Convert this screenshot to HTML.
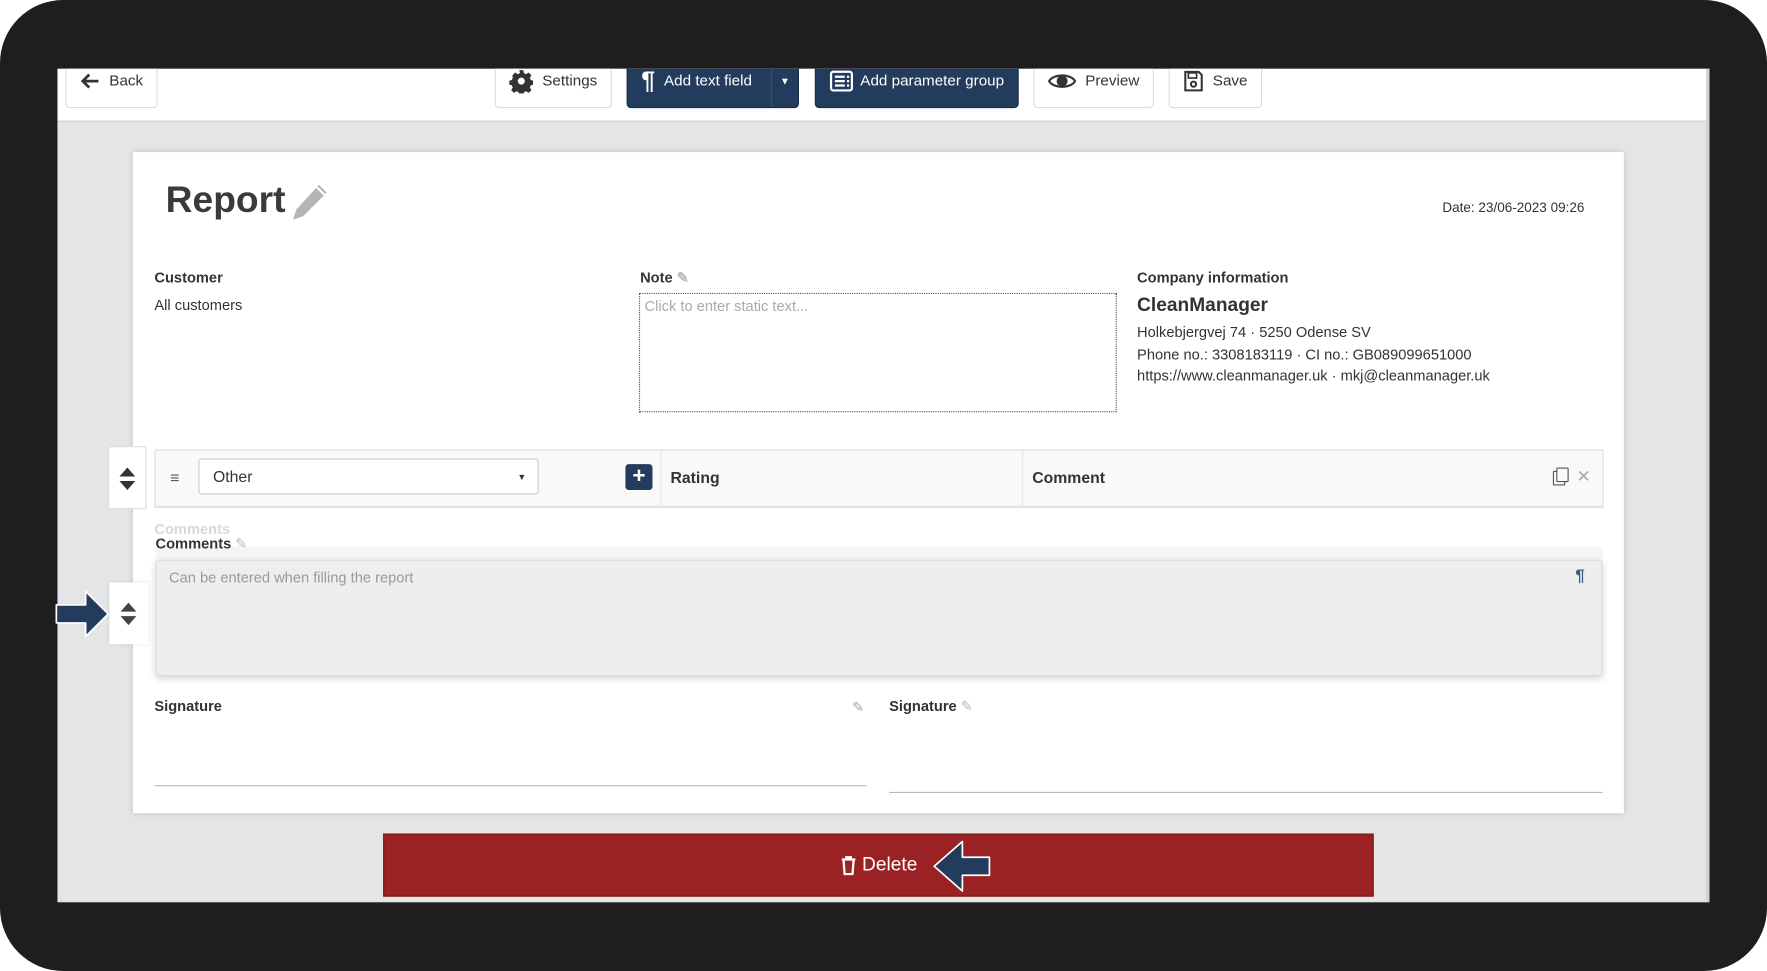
<!DOCTYPE html>
<html><head><meta charset="utf-8"><style>
html,body{margin:0;padding:0;width:1767px;height:971px;overflow:hidden;background:#fff}
#w{position:absolute;left:0;top:0;width:1568px;height:862px;transform:scale(1.12691,1.12645);transform-origin:0 0;font-family:"Liberation Sans",Arial,sans-serif;color:#333}
.frame{position:absolute;left:0;top:0;width:1568px;height:862px;background:#1f1e1f;border-radius:56px}
.scr{position:absolute;left:51px;top:61px;width:1466px;height:740px;background:#e4e5e7;overflow:hidden}
.top{position:absolute;left:0;top:0;width:1466px;height:46px;background:#fff;box-shadow:0 1px 2px rgba(0,0,0,.12)}
.btn{position:absolute;top:-6px;height:41px;border:1px solid #ddd;border-radius:0 0 4px 4px;background:#fff;font-size:13.5px;color:#333;display:flex;align-items:center;gap:8px;padding:0 12px 8px;box-sizing:border-box;white-space:nowrap}
.btn.d{background:#233b5c;color:#fff;border-color:#1a2d48}
.a{position:absolute}
.card{position:absolute;left:67px;top:74px;width:1323px;height:587px;background:#fff;box-shadow:0 0 6px rgba(0,0,0,.15)}
.lbl{font-size:13px;font-weight:bold;color:#333}
.t{font-size:13px;color:#333}
</style></head><body><div id="w">
<div class="frame"></div>
<div class="scr">
 <div class="top">
  <div class="btn" style="left:7px;width:82px"><svg width="22" height="18" viewBox="0 0 22 18"><path d="M10 2 3 9l7 7M3 9h17" stroke="#333" stroke-width="3" fill="none"/></svg>Back</div>
  <div class="btn" style="left:388px;width:104px"><svg width="22" height="22" viewBox="0 0 24 24"><path fill="#333" d="M10 1h4l.6 3 2.2 1 2.6-1.6 2.8 2.8-1.6 2.6 1 2.2 3 .6v4l-3 .6-1 2.2 1.6 2.6-2.8 2.8-2.6-1.6-2.2 1-.6 3h-4l-.6-3-2.2-1-2.6 1.6-2.8-2.8 1.6-2.6-1-2.2-3-.6v-4l3-.6 1-2.2L3 6.2 5.8 3.4 8.4 5l2.2-1zM12 8.5a3.5 3.5 0 1 0 0 7 3.5 3.5 0 0 0 0-7z"/></svg>Settings</div>
  <div class="btn d" style="left:505px;width:153px;padding:0 0 0 12px"><span style="font-size:22px;font-weight:bold;padding-bottom:8px">¶</span><span style="padding-bottom:8px">Add text field</span><span style="margin-left:auto;border-left:1px solid #34507a;width:24px;height:100%;display:flex;align-items:center;justify-content:center;font-size:9px;padding-bottom:8px;box-sizing:border-box">▼</span></div>
  <div class="btn d" style="left:672px;width:181px;gap:6px"><svg width="22" height="20" viewBox="0 0 22 20"><rect x="1.5" y="1.5" width="19" height="17" rx="2" fill="none" stroke="#fff" stroke-width="2"/><path d="M5 6h9M5 10h9M5 14h9M16 6h2M16 10h2M16 14h2" stroke="#fff" stroke-width="2"/></svg>Add parameter group</div>
  <div class="btn" style="left:866px;width:107px"><svg width="26" height="18" viewBox="0 0 26 18"><path d="M1 9C5 2 21 2 25 9 21 16 5 16 1 9z" fill="none" stroke="#333" stroke-width="2"/><circle cx="13" cy="9" r="5" fill="#333"/></svg>Preview</div>
  <div class="btn" style="left:986px;width:83px"><svg width="20" height="22" viewBox="0 0 20 22"><path d="M2 2h13l3 3v15H2z" fill="none" stroke="#333" stroke-width="2"/><rect x="5" y="3" width="8" height="5" fill="none" stroke="#333" stroke-width="1.6"/><circle cx="10" cy="14" r="2.5" fill="none" stroke="#333" stroke-width="2"/></svg>Save</div>
 </div>
 <div class="card">
  <div class="a" style="left:29px;top:23px;font-size:33px;font-weight:bold;color:#3a3a3a">Report</div>
  <svg class="a" style="left:139px;top:27px" width="36" height="36" viewBox="0 0 36 36"><path d="M26 2l7 7-21 21-9 3 3-9z" fill="#b5b5b5"/><path d="M24 4l7 7" stroke="#fff" stroke-width="2"/></svg>
  <div class="a t" style="right:35px;top:42px;font-size:12px">Date: 23/06-2023 09:26</div>
  <div class="a lbl" style="left:19px;top:104px">Customer</div>
  <div class="a t" style="left:19px;top:128px">All customers</div>
  <div class="a lbl" style="left:450px;top:104px">Note <span style="color:#bbb">✎</span></div>
  <div class="a" style="left:449px;top:125px;width:424px;height:106px;border:1px dotted #555;font-size:13px;color:#aaa;padding:3px 4px;box-sizing:border-box">Click to enter static text...</div>
  <div class="a lbl" style="left:891px;top:104px">Company information</div>
  <div class="a" style="left:891px;top:126px;font-size:17px;font-weight:bold;color:#333">CleanManager</div>
  <div class="a t" style="left:891px;top:150px;line-height:19.5px">Holkebjergvej 74 · 5250 Odense SV<br>Phone no.: 3308183119 · CI no.: GB089099651000<br>https://www.cleanmanager.uk · mkj@cleanmanager.uk</div>
  <div class="a" style="left:19px;top:264px;width:1284px;height:49px;background:#f9f9f9;border:1px solid #ddd;border-bottom:2px solid #e2e2e2"></div>
  <div class="a" style="left:33px;top:281px;font-size:14px;color:#555">≡</div>
  <div class="a" style="left:58px;top:272px;width:302px;height:32px;border:1px solid #ccc;border-radius:3px;background:#fff;font-size:14px;line-height:31px;padding-left:12px;box-sizing:border-box">Other<span style="position:absolute;right:10px;font-size:8px">▼</span></div>
  <div class="a" style="left:437px;top:277px;width:24px;height:23px;background:#233b5c;border-radius:3px;color:#fff;font-size:20px;font-weight:bold;text-align:center;line-height:23px">+</div>
  <div class="a" style="left:468px;top:265px;width:1px;height:49px;background:#e3e3e3"></div>
  <div class="a lbl" style="left:477px;top:281px;font-size:14px">Rating</div>
  <div class="a" style="left:789px;top:265px;width:1px;height:49px;background:#e3e3e3"></div>
  <div class="a lbl" style="left:798px;top:281px;font-size:14px">Comment</div>
  <div class="a" style="left:1260px;top:283px;width:9px;height:11px;border:1.5px solid #555;border-radius:1px"></div>
  <div class="a" style="left:1263px;top:280px;width:9px;height:11px;border:1.5px solid #555;border-radius:1px;background:#f9f9f9"></div>
  <div class="a" style="left:1281px;top:279px;font-size:15px;color:#aaa">✕</div>
  <div class="a lbl" style="left:19px;top:327px;color:#d8d8d8">Comments</div>
  <div class="a lbl" style="left:20px;top:340px;z-index:2">Comments <span style="color:#bbb;font-weight:normal">✎</span></div>
  <div class="a" style="left:20px;top:350px;width:1284px;height:30px;background:#f5f5f5;border-radius:3px"></div>
  <div class="a" style="left:20px;top:362px;width:1284px;height:103px;background:#eee;border:1px solid #ddd;border-radius:3px;box-shadow:0 2px 6px rgba(0,0,0,.18);box-sizing:border-box"></div>
  <div class="a t" style="left:32px;top:370px;color:#999">Can be entered when filling the report</div>
  <div class="a" style="left:1280px;top:368px;font-size:15px;font-weight:bold;color:#3d5a80">¶</div>
  <div class="a lbl" style="left:19px;top:484px">Signature</div>
  <div class="a" style="left:638px;top:485px;color:#aaa;font-size:13px">✎</div>
  <div class="a" style="left:19px;top:562px;width:632px;height:1px;background:#bbb"></div>
  <div class="a lbl" style="left:671px;top:484px">Signature <span style="color:#bbb;font-weight:normal">✎</span></div>
  <div class="a" style="left:671px;top:568px;width:633px;height:1px;background:#bbb"></div>
 </div>
 <div class="a" style="left:45px;top:335px;width:34px;height:56px;background:#fff;border:1px solid #ddd;box-sizing:border-box"><svg style="position:absolute;left:8px;top:17px" width="16" height="22" viewBox="0 0 16 22"><path d="M8 1l7 8H1zM8 21l7-8H1z" fill="#333"/></svg></div>
 <div class="a" style="left:46px;top:456px;width:35px;height:55px;background:#fff;box-shadow:0 0 3px rgba(0,0,0,.15)"><svg style="position:absolute;left:9px;top:17px" width="16" height="22" viewBox="0 0 16 22"><path d="M8 1l7 8H1zM8 21l7-8H1z" fill="#444"/></svg></div>
 <div class="a" style="left:289px;top:679px;width:879px;height:56px;background:#9b2224;border:1px solid #7a1416;box-sizing:border-box;color:#fff;font-size:17px;display:flex;align-items:center;justify-content:center;gap:4px;padding-right:0"><svg width="16" height="18" viewBox="0 0 16 18"><path d="M2 4h12M6 4V2h4v2M3.5 4l1 13h7l1-13" fill="none" stroke="#fff" stroke-width="2"/></svg>Delete</div>
 <svg class="a" style="left:775px;top:684px" width="56" height="48" viewBox="0 0 56 48"><path d="M28 2 3 24l25 22V32h24V16H28z" fill="#233b5c" stroke="#fff" stroke-width="1.5" stroke-linejoin="round"/></svg>
 <div class="a" style="left:1463px;top:0;width:3px;height:740px;background:#cfd0d2"></div>
</div>
<svg class="a" style="left:48px;top:523px" width="52" height="44" viewBox="0 0 52 44"><path d="M2 14h26V2l20 20-20 20V30H2z" fill="#233b5c" stroke="#fff" stroke-width="1.5" stroke-linejoin="round"/></svg>
</div></body></html>
